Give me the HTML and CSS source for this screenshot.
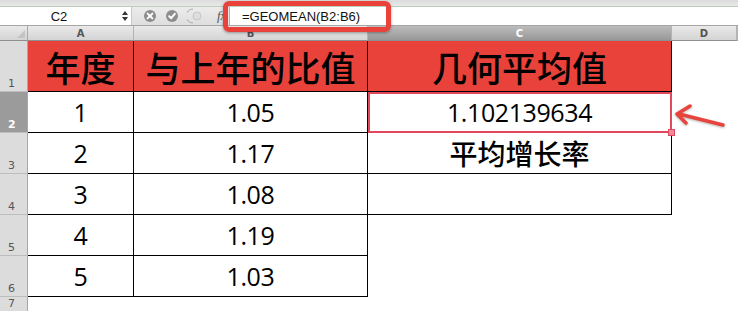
FILE: index.html
```html
<!DOCTYPE html>
<html lang='zh-CN'>
<head>
	<meta charset='UTF-8'>
	<title>几何平均值</title>
	<link rel="stylesheet" href="styles.css">
</head>
<body>
<div class='toolbar-edge'></div>

<div class='formula-bar'>
	<div class='name-box'>C2</div>
	<div class='stepper'>
		<svg width='6' height='12' viewBox='0 0 6 12'><path d='M3 1 L6 5 L0 5 Z M0 7 L6 7 L3 11 Z' fill='#333'/></svg>
	</div>
	<div class='tools'>
		<svg width='12' height='12' viewBox='0 0 12 12'><circle cx='6' cy='6' r='6' fill='#8d8d8d'/><path d='M3.6 3.6 L8.4 8.4 M8.4 3.6 L3.6 8.4' stroke='#fff' stroke-width='2' stroke-linecap='round'/></svg>
		<svg width='12' height='12' viewBox='0 0 12 12'><circle cx='6' cy='6' r='6' fill='#8d8d8d'/><path d='M3.2 6.2 L5.2 8.2 L8.8 3.8' stroke='#fff' stroke-width='2' fill='none' stroke-linecap='round' stroke-linejoin='round'/></svg>
		<svg class='pill' width='16' height='16' viewBox='0 0 16 16'><path d='M6 1 A7 7 0 0 0 6 15' stroke='#aaa' stroke-width='1' fill='none'/><circle cx='10' cy='8' r='4' fill='#ddd' stroke='#bbb' stroke-width='.7'/></svg>
		<span class='fx'>fx</span>
	</div>
	<div class='formula'>=GEOMEAN(B2:B6)</div>
	<div class='callout'></div>
</div>

<div class='sheet'>
	<div class='corner'><svg width='8' height='8' viewBox='0 0 8 8'><path d='M8 0 L8 8 L0 8 Z' fill='#c4c4c4'/></svg></div>
	<div class='col-head'>A</div>
	<div class='col-head'>B</div>
	<div class='col-head selected'>C</div>
	<div class='col-head'>D</div>
	<div class='col-head'></div>

	<div class='row-head'>1</div>
	<div class='cell b title'>年度</div>
	<div class='cell b title'>与上年的比值</div>
	<div class='cell b title'>几何平均值</div>
	<div class='cell'></div>
	<div class='cell'></div>

	<div class='row-head selected'>2</div>
	<div class='cell b num'>1</div>
	<div class='cell b num'>1.05</div>
	<div class='cell b num active'>1.102139634<span class='handle'></span></div>
	<div class='cell'></div>
	<div class='cell'></div>

	<div class='row-head'>3</div>
	<div class='cell b num'>2</div>
	<div class='cell b num'>1.17</div>
	<div class='cell b label'>平均增长率</div>
	<div class='cell'></div>
	<div class='cell'></div>

	<div class='row-head'>4</div>
	<div class='cell b num'>3</div>
	<div class='cell b num'>1.08</div>
	<div class='cell b'></div>
	<div class='cell'></div>
	<div class='cell'></div>

	<div class='row-head'>5</div>
	<div class='cell b num'>4</div>
	<div class='cell b num'>1.19</div>
	<div class='cell'></div>
	<div class='cell'></div>
	<div class='cell'></div>

	<div class='row-head'>6</div>
	<div class='cell b num'>5</div>
	<div class='cell b num'>1.03</div>
	<div class='cell'></div>
	<div class='cell'></div>
	<div class='cell'></div>

	<div class='row-head'>7</div>
	<div class='cell'></div>
	<div class='cell'></div>
	<div class='cell'></div>
	<div class='cell'></div>
	<div class='cell'></div>

	<svg class='arrow' width='60' height='30' viewBox='670 102 60 30'>
		<path d='M723 125 L679 114 M690 106 L677 114 L686 123' stroke='#e8433c' stroke-width='3.5' fill='none' stroke-linecap='round' stroke-linejoin='round'/>
	</svg>
</div>
</body>
</html>
```

FILE: styles.css
```css
:root {
	--red: #e9423b;
	--select: #e2475d;
	--head-text: #555;
}

html, body {
	margin: 0;
	width: 738px;
	height: 311px;
	overflow: hidden;
	background: #fff;
	font-family: "Liberation Sans", Arial, sans-serif;
}

/* the strip left over from the ribbon above */
.toolbar-edge {
	height: 6px;
	background: linear-gradient(#dcdcdc, #e8e8e8);
	border-bottom: 1px solid #b9d1b9;
}

/* formula bar */

.formula-bar {
	position: relative;
	z-index: 2;
	display: flex;
	height: 18px;
	border-bottom: 1px solid #a6a6a6;
	font-size: 13px;
	color: #111;
}

.name-box {
	width: 118px;
	display: flex;
	align-items: center;
	justify-content: center;
	box-sizing: border-box;
}

.stepper {
	width: 13px;
	display: flex;
	align-items: center;
	justify-content: center;
	border-right: 1px solid #c8c8c8;
}

.tools {
	width: 97px;
	display: flex;
	align-items: center;
	gap: 10px;
	padding-left: 12px;
	box-sizing: border-box;
	background: linear-gradient(#ececec, #dedede);
}

.tools .pill {
	margin-left: -1px;
}

.fx {
	font-family: "Liberation Serif", serif;
	font-style: italic;
	font-size: 13px;
	color: #555;
	margin-left: 4px;
}

.formula {
	flex: 1;
	display: flex;
	align-items: center;
	padding-left: 12px;
	border-left: 1px solid #b0b0b0;
}

.callout {
	position: absolute;
	left: 223px;
	top: -6px;
	width: 168px;
	height: 31px;
	box-sizing: border-box;
	border: 5px solid var(--red);
	border-radius: 6px;
	box-shadow: 0 1px 3px rgba(0, 0, 0, .35);
}

/* sheet */

.sheet {
	position: relative;
	z-index: 1;
	display: grid;
	grid-template-columns: 28px 106px 234px 304px 65px 1fr;
	grid-template-rows: 15px 51px repeat(5, 41px) 1fr;
	height: 285px;
}

.corner,
.col-head,
.row-head {
	box-sizing: border-box;
	background: linear-gradient(#e9e9e9, #d4d4d4);
	color: var(--head-text);
	font-family: "DejaVu Sans", sans-serif;
	font-size: 10px;
	font-weight: bold;
}

.corner {
	display: flex;
	align-items: flex-end;
	justify-content: flex-end;
	padding: 0 2px 2px 0;
	border-right: 1px solid #a8a8a8;
	border-bottom: 1px solid #8f8f8f;
}

.col-head {
	display: flex;
	align-items: center;
	justify-content: center;
	border-right: 1px solid #b4b4b4;
	border-bottom: 1px solid #8f8f8f;
}

.col-head.selected {
	background: linear-gradient(#bcbcbc, #989898);
	color: #fff;
}

.row-head {
	display: flex;
	align-items: flex-end;
	padding: 0 0 1px 8px;
	background: #dcdcdc;
	border-right: 1px solid #a8a8a8;
	border-bottom: 1px solid #bdbdbd;
	font-weight: normal;
	font-size: 11px;
}

.row-head.selected {
	background: #9b9b9b;
	color: #fff;
	font-weight: bold;
}

.cell {
	box-sizing: border-box;
	display: flex;
	align-items: center;
	justify-content: center;
	color: #000;
}

.cell.b {
	border-right: 1px solid #000;
	border-bottom: 1px solid #000;
}

.title {
	background: var(--red);
	font-family: "Noto Sans CJK SC", sans-serif;
	font-weight: 500;
	font-size: 35px;
	line-height: 1;
}

.label {
	font-family: "Noto Sans CJK SC", sans-serif;
	font-weight: 500;
	font-size: 28px;
	line-height: 1;
}

.num {
	font-family: "Open Sans", sans-serif;
	font-size: 25px;
	letter-spacing: -.4px;
	line-height: 1;
}

.active {
	position: relative;
	outline: 2px solid var(--select);
	outline-offset: -2px;
}

.handle {
	position: absolute;
	right: -4px;
	bottom: -4px;
	width: 5px;
	height: 5px;
	background: #ee8a9c;
	border: 1px solid var(--select);
}

.arrow {
	position: absolute;
	left: 670px;
	top: 76px;
	filter: drop-shadow(0 1px 1px rgba(0, 0, 0, .3));
}
```
